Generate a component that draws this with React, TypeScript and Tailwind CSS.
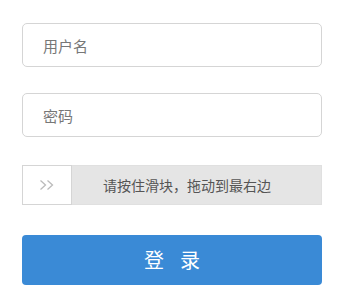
import React from 'react';

const font = { fontFamily: '"Noto Sans CJK SC", "Liberation Sans", sans-serif' };

const App = () => {
  return (
    <div className="w-[348px] h-[294px] bg-white" style={font}>
      <div className="flex flex-col pl-[22px] pt-[23px] w-[322px]">
        <input
          className="h-[44px] w-[300px] rounded-[5px] border border-[#d5d5d5] pl-[20px] text-[15px] text-[#333] placeholder:text-[#777] outline-none"
          placeholder="用户名"
        />
        <input
          type="password"
          className="mt-[26px] h-[44px] w-[300px] rounded-[5px] border border-[#d5d5d5] pl-[20px] text-[15px] text-[#333] placeholder:text-[#777] outline-none"
          placeholder="密码"
        />
        {/* slide verification */}
        <div className="mt-[28px] flex h-[40px] w-[300px] border border-[#e0e0e0] bg-[#e5e5e5]">
          <div className="-m-px mr-0 flex w-[50px] items-center justify-center border border-[#d5d5d5] bg-white">
            <svg width="16" height="12" viewBox="0 0 16 12" fill="none" stroke="#bbb" strokeWidth="1.3">
              <path d="M1.5 1.5 L6.5 6 L1.5 10.5" />
              <path d="M8.5 1.5 L13.5 6 L8.5 10.5" />
            </svg>
          </div>
          <div className="flex flex-1 items-center pl-[31px] text-[14px] text-[#555]">
            请按住滑块，拖动到最右边
          </div>
        </div>
        <button className="mt-[30px] flex h-[50px] w-[300px] items-center justify-center gap-[16px] rounded-[4px] bg-[#3a8ad6] text-[20px] text-white">
          <span>登</span>
          <span>录</span>
        </button>
      </div>
    </div>
  );
};

export default App;
